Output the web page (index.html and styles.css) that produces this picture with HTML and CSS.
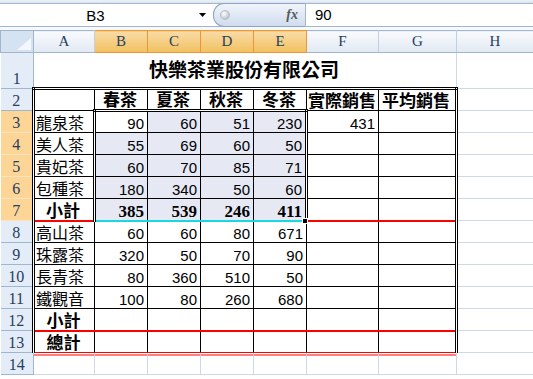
FILE: index.html
```html
<!DOCTYPE html>
<html lang="zh-Hant">
<head>
    <meta charset="UTF-8">
    <meta name="viewport" content="width=device-width, initial-scale=1.0">
    <title>快樂茶業股份有限公司</title>
    <link rel="stylesheet" href="styles.css">
</head>
<body>
    <div class="window">
        <div class="ribbon-edge"></div>
        <div class="formula-bar">
            <div class="name-box">
                <span class="cell-ref">B3</span>
                <svg class="drop" width="7" height="4" viewBox="0 0 7 4"><polygon points="0,0 7,0 3.5,4" fill="#000"/></svg>
            </div>
            <div class="fx-pill">
                <span class="knob"></span>
                <span class="fx">fx</span>
            </div>
            <div class="formula-input">90</div>
        </div>
        <div class="gap"></div>
        <div class="sheet">
            <table class="grid">
                <colgroup>
                    <col class="w-corner"><col class="w-a"><col class="w-n"><col class="w-n"><col class="w-n"><col class="w-n"><col class="w-f"><col class="w-g"><col class="w-h">
                </colgroup>
                <tr class="col-heads">
                    <th class="corner"><svg width="14" height="12" viewBox="0 0 14 12"><polygon points="14,0 14,12 0,12" fill="#f4f7fb"/></svg></th>
                    <th class="col">A</th>
                    <th class="col sel">B</th>
                    <th class="col sel">C</th>
                    <th class="col sel">D</th>
                    <th class="col sel">E</th>
                    <th class="col">F</th>
                    <th class="col">G</th>
                    <th class="col">H</th>
                </tr>
                <tr class="r-title">
                    <th class="rh">1</th>
                    <td class="title" colspan="7">快樂茶業股份有限公司</td>
                    <td></td>
                </tr>
                <tr>
                    <th class="rh">2</th>
                    <td class="t ol ot"></td>
                    <td class="t ot h">春茶</td>
                    <td class="t ot h">夏茶</td>
                    <td class="t ot h">秋茶</td>
                    <td class="t ot h">冬茶</td>
                    <td class="t ot h">實際銷售</td>
                    <td class="t ot or h">平均銷售</td>
                    <td></td>
                </tr>
                <tr>
                    <th class="rh sel">3</th>
                    <td class="t ol name">龍泉茶</td>
                    <td class="t n sl st">90</td>
                    <td class="t n hl st">60</td>
                    <td class="t n hl st">51</td>
                    <td class="t n hl st sr">230</td>
                    <td class="t n">431</td>
                    <td class="t or"></td>
                    <td></td>
                </tr>
                <tr>
                    <th class="rh sel">4</th>
                    <td class="t ol name">美人茶</td>
                    <td class="t n hl sl">55</td>
                    <td class="t n hl">69</td>
                    <td class="t n hl">60</td>
                    <td class="t n hl sr">50</td>
                    <td class="t"></td>
                    <td class="t or"></td>
                    <td></td>
                </tr>
                <tr>
                    <th class="rh sel">5</th>
                    <td class="t ol name">貴妃茶</td>
                    <td class="t n hl sl">60</td>
                    <td class="t n hl">70</td>
                    <td class="t n hl">85</td>
                    <td class="t n hl sr">71</td>
                    <td class="t"></td>
                    <td class="t or"></td>
                    <td></td>
                </tr>
                <tr>
                    <th class="rh sel">6</th>
                    <td class="t ol name">包種茶</td>
                    <td class="t n hl sl">180</td>
                    <td class="t n hl">340</td>
                    <td class="t n hl">50</td>
                    <td class="t n hl sr">60</td>
                    <td class="t"></td>
                    <td class="t or"></td>
                    <td></td>
                </tr>
                <tr>
                    <th class="rh sel">7</th>
                    <td class="t ol h red-b">小計</td>
                    <td class="t nb hl sl cyan-b">385</td>
                    <td class="t nb hl cyan-b">539</td>
                    <td class="t nb hl cyan-b">246</td>
                    <td class="t nb hl sr cyan-b">411</td>
                    <td class="t red-b"></td>
                    <td class="t or red-b"></td>
                    <td></td>
                </tr>
                <tr>
                    <th class="rh">8</th>
                    <td class="t ol name">高山茶</td>
                    <td class="t n">60</td>
                    <td class="t n">60</td>
                    <td class="t n">80</td>
                    <td class="t n">671</td>
                    <td class="t"></td>
                    <td class="t or"></td>
                    <td></td>
                </tr>
                <tr>
                    <th class="rh">9</th>
                    <td class="t ol name">珠露茶</td>
                    <td class="t n">320</td>
                    <td class="t n">50</td>
                    <td class="t n">70</td>
                    <td class="t n">90</td>
                    <td class="t"></td>
                    <td class="t or"></td>
                    <td></td>
                </tr>
                <tr>
                    <th class="rh">10</th>
                    <td class="t ol name">長青茶</td>
                    <td class="t n">80</td>
                    <td class="t n">360</td>
                    <td class="t n">510</td>
                    <td class="t n">50</td>
                    <td class="t"></td>
                    <td class="t or"></td>
                    <td></td>
                </tr>
                <tr>
                    <th class="rh">11</th>
                    <td class="t ol name">鐵觀音</td>
                    <td class="t n">100</td>
                    <td class="t n">80</td>
                    <td class="t n">260</td>
                    <td class="t n">680</td>
                    <td class="t"></td>
                    <td class="t or"></td>
                    <td></td>
                </tr>
                <tr>
                    <th class="rh">12</th>
                    <td class="t ol h red-b">小計</td>
                    <td class="t red-b"></td>
                    <td class="t red-b"></td>
                    <td class="t red-b"></td>
                    <td class="t red-b"></td>
                    <td class="t red-b"></td>
                    <td class="t or red-b"></td>
                    <td></td>
                </tr>
                <tr>
                    <th class="rh">13</th>
                    <td class="t ol h red-line">總計</td>
                    <td class="t red-line"></td>
                    <td class="t red-line"></td>
                    <td class="t red-line"></td>
                    <td class="t red-line"></td>
                    <td class="t red-line"></td>
                    <td class="t or red-line"></td>
                    <td></td>
                </tr>
                <tr>
                    <th class="rh">14</th>
                    <td class="under"></td><td class="under"></td><td class="under"></td><td class="under"></td><td class="under"></td><td class="under"></td><td class="under"></td><td></td>
                </tr>
            </table>
            <span class="fill-handle"></span>
        </div>
    </div>
</body>
</html>
```

FILE: styles.css
```css
body {
    margin: 0;
    background-color: #fff;
    font-family: "Liberation Sans", "Noto Sans CJK TC", sans-serif;
}

.window {
    width: 533px;
    height: 379px;
    overflow: hidden;
}

.ribbon-edge {
    height: 3px;
    background: linear-gradient(#eef2f8, #d9e2ee);
}

/* formula bar */
.formula-bar {
    display: flex;
    height: 22px;
    border-top: 1px solid #a3b6cf;
    border-bottom: 1px solid #a3b6cf;
    background-color: #fff;
}

.name-box {
    width: 208px;
    display: flex;
    align-items: center;
}

.cell-ref {
    flex: 1;
    text-align: center;
    font-size: 15px;
    color: #000;
    padding-right: 8px;
}

.drop {
    margin-right: 2px;
}

.fx-pill {
    width: 91px;
    margin: -1px 0 -1px 5px;
    display: flex;
    align-items: center;
    justify-content: space-between;
    border: 1px solid #8da6c8;
    border-right: none;
    border-radius: 11px 0 0 11px;
    background: linear-gradient(#f1f5fb, #cfdcee);
}

.knob {
    width: 8px;
    height: 8px;
    margin-left: 6px;
    border-radius: 50%;
    background: radial-gradient(circle at 35% 35%, #ffffff, #a9aeb6);
    border: 1px solid #b8bec7;
}

.fx {
    font-family: "Liberation Serif", serif;
    font-style: italic;
    font-weight: bold;
    font-size: 14px;
    color: #5a5a5a;
    margin-right: 7px;
}

.formula-input {
    flex: 1;
    border-left: 1px solid #a3b6cf;
    padding-left: 9px;
    font-size: 15px;
    line-height: 22px;
}

.gap {
    height: 3px;
    background-color: #f7f9fc;
}

/* sheet grid */
.sheet {
    position: relative;
}

.grid {
    border-collapse: collapse;
    table-layout: fixed;
    width: 533px;
}

.w-corner { width: 33px; }
.w-a { width: 61px; }
.w-n { width: 53px; }
.w-f { width: 72px; }
.w-g { width: 78px; }
.w-h { width: 77px; }

.grid tr {
    height: 22px;
}

.grid tr.r-title {
    height: 36px;
}

.grid th,
.grid td {
    border: 1px solid #d0d7e5;
    padding: 0 3px 0 1px;
    white-space: nowrap;
    overflow: hidden;
    vertical-align: bottom;
    font-size: 16px;
    line-height: 17px;
    font-weight: normal;
}

.grid .corner {
    background-color: #d5e2f2;
    border: 1px solid #9eb6ce;
    text-align: right;
    padding: 0 2px 2px 0;
    line-height: 0;
}

.grid .col {
    background: linear-gradient(#f8fafd, #e2e9f3);
    border: 1px solid #c3cfde;
    border-bottom-color: #9eb6ce;
    border-top-color: #9eb6ce;
    font-family: "Liberation Serif", serif;
    font-size: 15px;
    color: #24405f;
    text-align: center;
    vertical-align: middle;
    padding: 0;
}

.grid .col.sel {
    background: linear-gradient(#f9dba6, #f1c15f);
    border-color: #f29536;
}

.grid .rh {
    background-color: #e4ecf7;
    border: 1px solid #9eb6ce;
    border-left: none;
    font-family: "Liberation Serif", serif;
    font-size: 16px;
    color: #24405f;
    text-align: center;
    padding: 0 0 1px 0;
}

.grid .rh.sel {
    background-color: #fdd597;
    border-bottom-color: #fbe3bd;
    border-right-color: #f29536;
}

.grid .title {
    text-align: center;
    font-size: 19px;
    font-weight: bold;
    line-height: 24px;
    padding-bottom: 4px;
    color: #000;
}

/* table borders */
.grid .t { border: 1px solid #000; }
.grid .ol { border-left: 3px double #000; }
.grid .ot { border-top: 3px double #000; }
.grid .or { border-right: 3px double #000; }

/* selection B3:E7 */
.grid .sl { border-left: 3px double #000; }
.grid .sr { border-right: 3px double #000; }
.grid .st { border-top: 3px double #000; }
.grid .hl { background-color: #e6e9f4; }

.grid .red-b { border-bottom: 2px solid #ff0000; }
.grid .cyan-b { border-bottom: 2px solid #1ad8e2; }
.grid .red-line { border-bottom: 1px solid #ff0000; }

/* second line of the double underline under row 13 */
.grid .under {
    border-top: 1px solid #ff0000;
    background: linear-gradient(#fff 0, #fff 1px, #ff0000 1px, #ff0000 2px, transparent 2px);
}

.grid .h {
    text-align: center;
    font-weight: bold;
    font-size: 17px;
}

.grid .n {
    text-align: right;
    font-family: "Liberation Sans Narrow", "Liberation Sans", sans-serif;
    font-size: 15px;
}

.grid .nb {
    text-align: right;
    font-family: "Liberation Serif", serif;
    font-weight: bold;
    font-size: 17px;
}

.fill-handle {
    position: absolute;
    left: 302px;
    top: 188px;
    width: 4px;
    height: 4px;
    background-color: #000;
    border: 1px solid #fff;
}
```
